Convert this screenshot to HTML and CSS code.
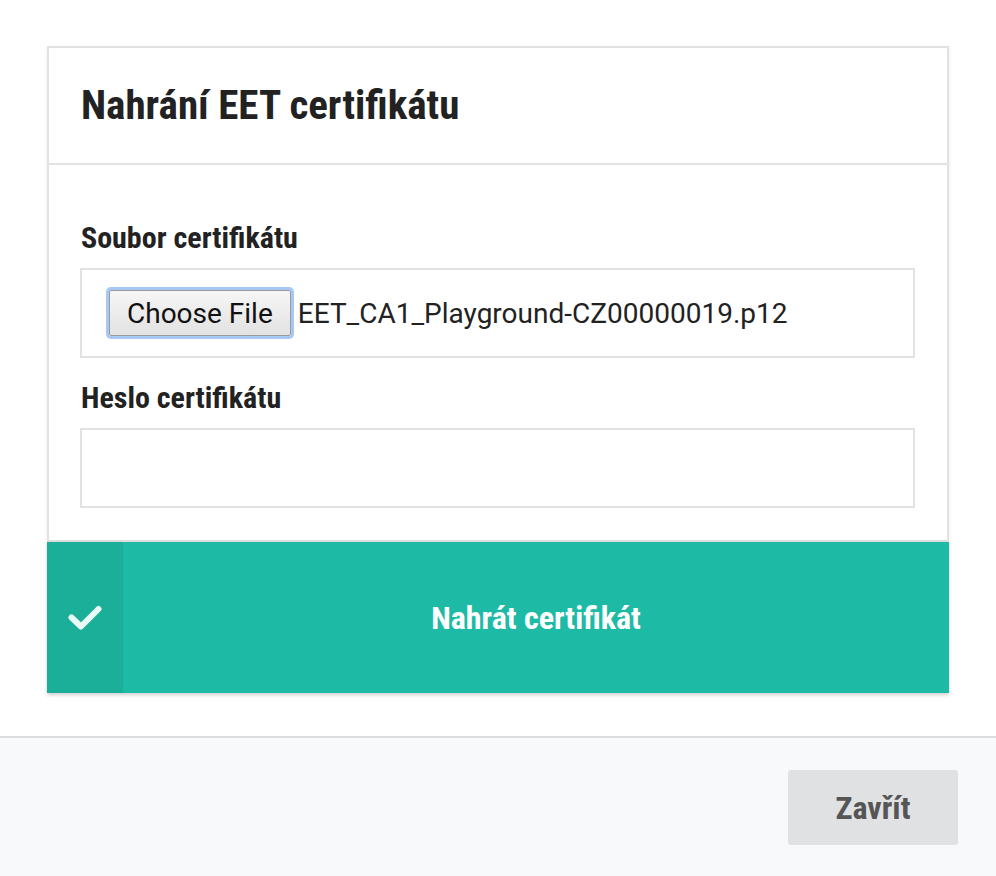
FILE: index.html
```html
<!DOCTYPE html>
<html lang="cs">
<head>
<meta charset="utf-8">
<title>Nahrání EET certifikátu</title>
<link rel="stylesheet" href="styles.css">
</head>
<body>
<main class="content">
  <section class="card">
    <header class="card-header">
      <h2 class="card-title">Nahrání EET certifikátu</h2>
    </header>
    <div class="card-body">
      <div class="field">
        <label class="field-label">Soubor certifikátu</label>
        <div class="file-box">
          <button class="choose-btn" type="button">Choose File</button>
          <span class="file-name">EET_CA1_Playground-CZ00000019.p12</span>
        </div>
      </div>
      <div class="field">
        <label class="field-label">Heslo certifikátu</label>
        <div class="text-input"></div>
      </div>
    </div>
    <button class="submit-btn" type="button">
      <span class="submit-icon">
        <svg width="34" height="26" viewBox="0 0 34 26" aria-hidden="true">
          <polyline points="3.5,12.5 13,21.5 30.5,4" fill="none" stroke="#eafaf7" stroke-width="6" stroke-linecap="round" stroke-linejoin="round"/>
        </svg>
      </span>
      <span class="submit-label">Nahrát certifikát</span>
    </button>
  </section>
</main>
<footer class="modal-footer">
  <button class="close-btn" type="button">Zavřít</button>
</footer>
</body>
</html>
```
FILE: styles.css
```css
html, body {
  margin: 0;
  padding: 0;
  background: #ffffff;
  font-family: "Roboto Condensed", Roboto, "Liberation Sans Narrow", sans-serif;
}

.content {
  padding: 46px 47px 43px 47px;
}

.card {
  border: 2px solid #e2e2e2;
  background: #fff;
  box-shadow: 0 2px 4px rgba(0, 0, 0, 0.08);
  display: flex;
  flex-direction: column;
}

.card-header {
  border-bottom: 2px solid #e2e2e2;
  padding: 0 32px;
  height: 115px;
  display: flex;
  align-items: center;
}

.card-title {
  margin: 0;
  font-family: "Roboto Condensed", Roboto, sans-serif;
  font-stretch: 75%;
  font-weight: 700;
  font-size: 41px;
  color: #222;
  line-height: 1;
}

.card-body {
  padding: 56px 32px 32px 31px;
  border-bottom: 2px solid #dedede;
  display: flex;
  flex-direction: column;
  gap: 23px;
}

.field {
  display: flex;
  flex-direction: column;
  gap: 13px;
}

.field-label {
  font-family: "Roboto Condensed", Roboto, sans-serif;
  font-stretch: 75%;
  font-weight: 700;
  font-size: 30px;
  color: #222;
  line-height: 34px;
  padding-left: 1px;
}

.file-box {
  border: 2px solid #e2e2e2;
  height: 86px;
  display: flex;
  align-items: center;
  padding-left: 27px;
  gap: 7px;
}

.choose-btn {
  font-family: Roboto, sans-serif;
  font-size: 28px;
  color: #111;
  height: 46px;
  padding: 0 17px;
  border: 1px solid #9a9a9a;
  border-radius: 2px;
  background: linear-gradient(#f6f6f6, #e2e2e2);
  outline: 3px solid #a5c8f5;
  outline-offset: 0;
}

.file-name {
  font-family: Roboto, sans-serif;
  font-size: 28px;
  color: #222;
}

.text-input {
  border: 2px solid #e2e2e2;
  height: 76px;
}

.submit-btn {
  margin: 0 -2px -2px -2px;
  border: 0;
  padding: 0;
  height: 151px;
  background: #1dbba5;
  display: flex;
  align-items: stretch;
  cursor: pointer;
  box-shadow: 0 2px 4px rgba(0, 0, 0, 0.12);
}

.submit-icon {
  width: 76px;
  background: #1bae99;
  display: flex;
  align-items: center;
  justify-content: center;
}

.submit-label {
  flex: 1;
  display: flex;
  align-items: center;
  justify-content: center;
  font-family: "Roboto Condensed", Roboto, sans-serif;
  font-stretch: 75%;
  font-weight: 700;
  font-size: 32px;
  color: #fff;
}

.modal-footer {
  border-top: 2px solid #dcdcdc;
  background: #f8f9fa;
  height: 140px;
  display: flex;
  justify-content: flex-end;
  align-items: flex-start;
  padding: 32px 38px 0 0;
  box-sizing: border-box;
}

.close-btn {
  width: 170px;
  height: 75px;
  border: 0;
  border-radius: 3px;
  background: #e0e1e3;
  font-family: "Roboto Condensed", Roboto, sans-serif;
  font-stretch: 75%;
  font-weight: 700;
  font-size: 32px;
  color: #555;
}
```
